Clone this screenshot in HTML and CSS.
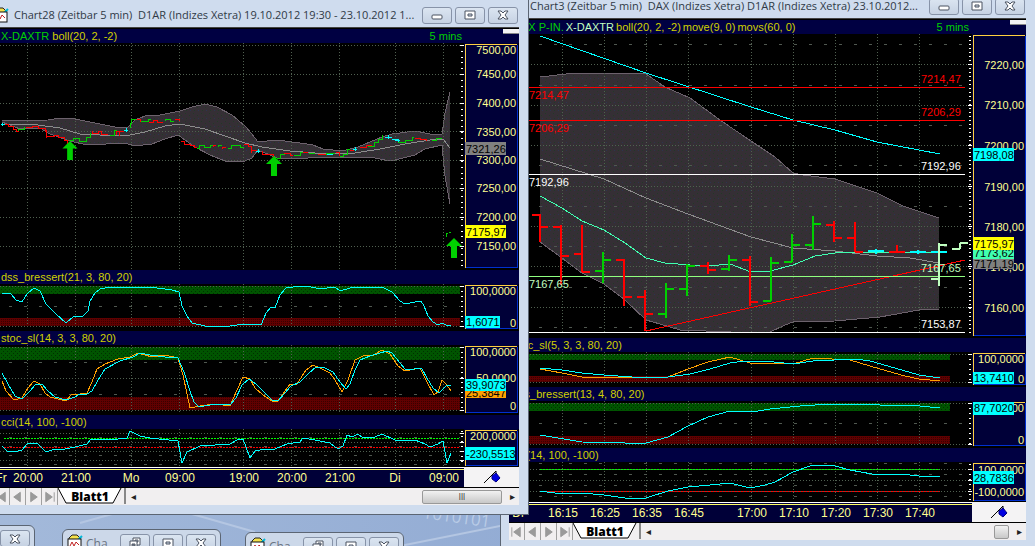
FILE: index.html
```html
<!DOCTYPE html>
<html lang="de">
<head>
  <meta charset="UTF-8">
  <meta name="viewport" content="width=device-width, initial-scale=1.0">
  <title>Chart28 (Zeitbar 5 min)</title>
  <link rel="stylesheet" href="styles.css">
</head>
<body>

  <!-- Shared symbols and fill patterns -->
  <svg class="defs" aria-hidden="true">
    <defs>
      <pattern id="bandFill" width="8" height="8" patternUnits="userSpaceOnUse">
        <rect width="8" height="8" fill="#352f35"/>
        <path d="M1 1h1v1h-1zM5 3h1v1h-1zM2 6h1v1h-1z" fill="#223a26"/>
        <path d="M6 6h1v1h-1z" fill="#2c3450"/>
      </pattern>
      <pattern id="greenFill" width="4" height="4" patternUnits="userSpaceOnUse">
        <rect width="4" height="4" fill="#005400"/>
        <path d="M1 1h1v1h-1zM3 3h1v1h-1z" fill="#003000"/>
      </pattern>
      <pattern id="redFill" width="4" height="4" patternUnits="userSpaceOnUse">
        <rect width="4" height="4" fill="#600000"/>
        <path d="M1 1h1v1h-1zM3 1h1v1h-1zM1 3h1v1h-1zM3 3h1v1h-1z" fill="#380000"/>
      </pattern>
      <symbol id="arrow" viewBox="0 0 16 20"><path d="M8 0L16 8H11V20H5V8H0Z" fill="#00d000"/></symbol>
      <symbol id="min" viewBox="0 0 12 12"><rect x="1" y="6" width="10" height="4" rx="1" fill="#fff" stroke="#4b5361"/></symbol>
      <symbol id="max" viewBox="0 0 12 12"><path d="M1 2H11V10H1Z M4 5V7H8V5Z" fill="#fff" fill-rule="evenodd" stroke="#4b5361"/></symbol>
      <symbol id="restore" viewBox="0 0 12 12"><path d="M4 1H11V8H4Z M6 3V5H9V3Z" fill="#fff" fill-rule="evenodd" stroke="#4b5361"/><path d="M1 4H8V11H1Z M3 7V9H6V7Z" fill="#fff" fill-rule="evenodd" stroke="#4b5361"/></symbol>
      <symbol id="close" viewBox="0 0 12 12"><path d="M1 2H4L6 4L8 2H11L8 6L11 10H8L6 8L4 10H1L4 6Z" fill="#fff" stroke="#4b5361"/></symbol>
      <symbol id="doc" viewBox="0 0 16 16">
        <path d="M2 4L5 1H10L13 4V7H2Z" fill="#f4e04a" stroke="#222"/>
        <path d="M15 2L11 6" stroke="#00b8d8" stroke-width="2"/>
        <rect x="1" y="5" width="13" height="10" fill="#fff" stroke="#111"/>
        <path d="M3 12L5 8L7 12L9 8L12 11" fill="none" stroke="#c02020"/>
      </symbol>
      <symbol id="pin" viewBox="0 0 18 14">
        <path d="M1 13L13 1V12" fill="none" stroke="#000"/>
        <path d="M9 6L13 3L17 8L13 12L9 9Z" fill="#0000e0" stroke="#000080"/>
      </symbol>
    </defs>
  </svg>

  <main class="desktop">
    <svg class="wallpaper" viewBox="0 0 520 40" aria-hidden="true">
      <path d="M80 17L130 3M178 4L255 26M400 40L510 18" class="streak"/>
      <text x="422" y="12" transform="rotate(8 422 12)">1010101</text>
    </svg>

    <!-- Minimised windows -->
    <section class="mini mini-a">
      <button type="button" class="wbtn" aria-label="Schließen"><svg><use href="#close"/></svg></button>
    </section>
    <section class="mini mini-b">
      <svg class="doc"><use href="#doc"/></svg>
      <span class="mini-title">Cha</span>
      <button type="button" class="wbtn" aria-label="Wiederherstellen"><svg><use href="#restore"/></svg></button>
      <button type="button" class="wbtn" aria-label="Maximieren"><svg><use href="#max"/></svg></button>
      <button type="button" class="wbtn" aria-label="Schließen"><svg><use href="#close"/></svg></button>
    </section>
    <section class="mini mini-c">
      <svg class="doc"><use href="#doc"/></svg>
      <span class="mini-title">Cha</span>
      <button type="button" class="wbtn" aria-label="Wiederherstellen"><svg><use href="#restore"/></svg></button>
      <button type="button" class="wbtn" aria-label="Maximieren"><svg><use href="#max"/></svg></button>
      <button type="button" class="wbtn" aria-label="Schließen"><svg><use href="#close"/></svg></button>
    </section>

    <!-- Chart3 -->
    <section class="window chart3">
      <header class="titlebar">
        <svg class="doc"><use href="#doc"/></svg>
        <h2>Chart3 (Zeitbar 5 min)&nbsp; DAX (Indizes Xetra) D1AR (Indizes Xetra) 23.10.2012...</h2>
        <button type="button" class="wbtn" aria-label="Minimieren"><svg><use href="#min"/></svg></button>
        <button type="button" class="wbtn" aria-label="Maximieren"><svg><use href="#max"/></svg></button>
        <button type="button" class="wbtn" aria-label="Schließen"><svg><use href="#close"/></svg></button>
      </header>
      <div class="content">
        <div class="study">
          <span class="green">DAX P-IN.</span><span class="pale">X-DAXTR</span><span>boll(20, 2, -2)</span><span>move(9, 0)</span><span>movs(60, 0)</span>
          <span class="interval">5 mins</span><i class="grip"></i>
        </div>
        <svg class="plot" viewBox="509 34 517 303">
          <path class="band" d="M540 77L575 73H640L646 74L665 87L690 98L720 120L751 141L775 157L793 173L803 175L835 179L877 193L903 206L939 218V309L919 310L880 317L835 321L793 322L785 325L770 332L757 333L680 330L660 324L646 320L625 300L604 284L582 273L562 258L540 242Z"/>
          <path class="edge" d="M540 77L575 73H640L646 74L665 87L690 98L720 120L751 141L775 157L793 173L803 175L835 179L877 193L903 206L939 218M939 309L919 310L880 317L835 321L793 322L785 325L770 332L757 333L680 330L660 324L646 320L625 300L604 284L582 273L562 258L540 242"/>
          <path class="grid" d="M562 34V333M604 34V333M646 34V333M688 34V333M751 34V333M793 34V333M835 34V333M877 34V333M919 34V333M528 64H968M528 105H968M528 145H968M528 186H968M528 226H968M528 266H968M528 307H968"/>
          <path class="dashes" d="M539 44H968M539 85H968M539 125H968M539 165H968M539 206H968M539 246H968M539 287H968M539 327H968"/>
          <path class="avg" d="M540 159L604 179L646 198L688 214L751 237L793 248L835 251L877 256L910 258L939 263"/>
          <path class="cyan" d="M540 36L646 73L751 107L793 120L835 130L877 142L919 150L940 154"/>
          <path class="aqua" d="M540 196L562 208L582 221L604 230L625 243L646 258L665 263L690 265L708 266L730 264L751 272L770 271L793 265L815 256L835 253L939 252"/>
          <path class="red" d="M509 87H965M509 120H965M646 331L965 260"/>
          <path class="white" d="M509 174H965M509 332H965"/>
          <path class="lime" d="M509 276H965"/>
          <!-- price bars -->
          <path class="bar down" d="M532 215H540M540 214V242M540 227H548M553 227H561M561 225V285M561 256H569M574 254H582M582 225V272M582 272H590M616 260H624M624 259V306M624 297H632M637 297H645M645 290V331M645 314H653M700 266H708M708 262V274M708 270H716M742 260H750M750 256V306M750 302H758M826 225H834M834 221V242M834 238H842M847 238H855M855 222V252M855 252H863M889 252H905M897 245V252"/>
          <path class="bar up" d="M595 271H603M603 252V283M603 260H611M658 314H666M666 283V318M666 289H674M679 289H687M687 264V296M687 266H695M721 269H729M729 255V271M729 260H737M763 301H771M771 257V301M771 263H779M784 262H792M792 234V262M792 245H800M805 245H813M813 216V250M813 224H821"/>
          <path class="bar flat" d="M868 251H884M876 249V254M910 252H926M918 250V254M931 252H947"/>
          <path class="bar last" d="M931 279H939M939 243V286M939 245H947M952 249H960M960 243V249M960 243H968"/>
          <g class="lbl">
            <g class="f-red"><text x="529" y="99">7214,47</text><text x="529" y="132">7206,29</text><text x="921" y="83">7214,47</text><text x="921" y="116">7206,29</text></g>
            <g class="f-white"><text x="529" y="186">7192,96</text><text x="921" y="170">7192,96</text><text x="921" y="328">7153,87</text></g>
            <g class="f-pale"><text x="529" y="288">7167,65</text><text x="921" y="272">7167,65</text></g>
          </g>
          <path class="ticks t4" d="M970 36V334"/>
          <path class="majors" d="M968 64H972M968 105H972M968 145H972M968 186H972M968 226H972M968 266H972M968 307H972"/>
          <rect class="scale" x="972" y="34" width="54" height="302"/>
          <path class="scale-hi" d="M973 336V35H1025"/><path class="scale-lo" d="M974 335H1025V36"/>
          <g class="lbl axis">
            <text x="1024" y="69">7220,00</text><text x="1024" y="109">7210,00</text><text x="1024" y="150">7200,00</text><text x="1024" y="191">7190,00</text><text x="1024" y="231">7180,00</text><text x="1024" y="271">7170,00</text><text x="1024" y="312">7160,00</text>
          </g>
          <g class="lbl tag">
            <rect class="tag-cyan" x="973" y="148" width="41" height="13"/><text x="974" y="159">7198,08</text>
            <rect class="tag-grey" x="973" y="257" width="41" height="12"/><text x="974" y="268">7171,19</text>
            <rect class="tag-aqua" x="973" y="247" width="41" height="12"/><text x="974" y="257">7173,62</text>
            <rect class="tag-yellow" x="973" y="237" width="41" height="13"/><text x="974" y="248">7175,97</text>
          </g>
        </svg>

        <div class="study"><span>stoc_sl(5, 3, 3, 80, 20)</span></div>
        <svg class="plot" viewBox="509 352 517 34">
          <rect class="over" x="509" y="354" width="441" height="6"/><rect class="under" x="509" y="376" width="441" height="6"/>
          <path class="grid" d="M562 352V385M604 352V385M646 352V385M688 352V385M751 352V385M793 352V385M835 352V385M877 352V385M919 352V385M509 354H968M509 382H968"/>
          <path class="orange" d="M540 369L562 373L582 377H668L688 369L708 362L730 357L750 363H765L793 364L813 358L850 360L880 369L905 376L919 379L940 381"/>
          <path class="cyan" d="M540 368L562 370L582 373L604 375L646 378L668 377L690 374L710 369L730 363L745 361H765L793 364L813 361L855 359L870 361L895 368L919 375L940 378"/>
          <path class="ticks t5" d="M970 354V384"/><path class="majors" d="M968 354H972M968 382H972"/>
          <rect class="scale" x="972" y="352" width="54" height="33"/>
          <path class="scale-hi" d="M973 385V353H1025"/><path class="scale-lo" d="M974 384H1025V354"/>
          <g class="lbl axis"><text x="1024" y="363">100,0000</text><text x="1024" y="383">0</text></g>
          <g class="lbl tag"><rect class="tag-cyan" x="973" y="372" width="41" height="12"/><text x="974" y="382">13,7410</text></g>
        </svg>

        <div class="study"><span>dss_bressert(13, 4, 80, 20)</span></div>
        <svg class="plot" viewBox="509 401 517 46">
          <rect class="over" x="509" y="403" width="441" height="8"/><rect class="under" x="509" y="436" width="441" height="8"/>
          <path class="grid" d="M562 401V446M604 401V446M646 401V446M688 401V446M751 401V446M793 401V446M835 401V446M877 401V446M919 401V446M509 403H968M509 444H968"/>
          <path class="dashes" d="M539 423H968"/>
          <path class="cyan" d="M540 435L582 442L625 443H646L668 437L688 426L708 417L730 411L752 412L770 409L800 406L830 404H855L880 405H910L940 408"/>
          <path class="ticks t5" d="M970 403V446"/><path class="majors" d="M968 403H972M968 444H972"/>
          <rect class="scale" x="972" y="401" width="54" height="45"/>
          <path class="scale-hi" d="M973 446V402H1025"/><path class="scale-lo" d="M974 445H1025V403"/>
          <g class="lbl axis"><text x="1024" y="412">100,0000</text><text x="1024" y="444">0</text></g>
          <g class="lbl tag"><rect class="tag-cyan" x="973" y="402" width="41" height="13"/><text x="974" y="412">87,7020</text></g>
        </svg>

        <div class="study"><span>cci(14, 100, -100)</span></div>
        <svg class="plot" viewBox="509 462 517 40">
          <path class="grid" d="M562 462V501M604 462V501M646 462V501M688 462V501M751 462V501M793 462V501M835 462V501M877 462V501M919 462V501M509 469H968M509 480H968M509 491H968"/>
          <path class="dashes" d="M539 463H968M539 474H968M539 485H968M539 496H968"/>
          <path class="dot-green" d="M540 469H940"/><path class="dot-red" d="M540 491H940"/>
          <path class="cyan" d="M540 491L562 494L582 493L604 495L625 498H646L668 491L688 487L710 485L730 483L750 488L765 485L775 482L793 472L813 465L835 466L850 470L872 474H900L919 476L940 477"/>
          <path class="ticks t5" d="M970 464V500"/><path class="majors" d="M968 469H972M968 480H972M968 491H972"/>
          <rect class="scale" x="972" y="462" width="54" height="39"/>
          <path class="scale-hi" d="M973 501V463H1025"/><path class="scale-lo" d="M974 500H1025V464"/>
          <g class="lbl axis"><text x="1024" y="474">100,0000</text><text x="1024" y="496">-100,0000</text></g>
          <g class="lbl tag"><rect class="tag-cyan" x="973" y="471" width="41" height="13"/><text x="974" y="482">28,7836</text></g>
        </svg>

        <div class="timeline">
          <svg class="times" viewBox="509 502 463 20">
            <rect class="navy" x="509" y="502" width="463" height="20"/>
            <rect x="509" y="502" width="463" height="1" fill="#fff"/><rect x="509" y="504" width="463" height="1" fill="#ffff60"/>
            <g class="clock"><text x="518" y="517">Di</text><text x="563" y="517">16:15</text><text x="605" y="517">16:25</text><text x="647" y="517">16:35</text><text x="689" y="517">16:45</text><text x="752" y="517">17:00</text><text x="794" y="517">17:10</text><text x="836" y="517">17:20</text><text x="878" y="517">17:30</text><text x="920" y="517">17:40</text></g>
          </svg>
          <div class="corner"><svg class="pin"><use href="#pin"/></svg></div>
        </div>
        <nav class="sheets">
          <button type="button" class="nav" aria-label="Erstes Blatt"><svg viewBox="0 0 16 16"><path d="M3 3V13M12 3V13L5 8Z"/></svg></button>
          <button type="button" class="nav" aria-label="Vorheriges Blatt"><svg viewBox="0 0 16 16"><path d="M11 3V13L4 8Z"/></svg></button>
          <button type="button" class="nav" aria-label="Nächstes Blatt"><svg viewBox="0 0 16 16"><path d="M5 3V13L12 8Z"/></svg></button>
          <button type="button" class="nav" aria-label="Letztes Blatt"><svg viewBox="0 0 16 16"><path d="M13 3V13M4 3V13L11 8Z"/></svg></button>
          <button type="button" class="tab"><svg viewBox="0 0 64 16"><path d="M0 0L8 15H55L63 0" fill="#fff" stroke="#000"/></svg><b>Blatt1</b></button>
          <i class="splitter"></i>
          <div class="scrollbar"><span>◂</span><i class="thumb small"></i><span>▸</span></div>
        </nav>
      </div>
    </section>

    <!-- Chart28 -->
    <section class="window chart28">
      <header class="titlebar">
        <svg class="doc"><use href="#doc"/></svg>
        <h2>Chart28 (Zeitbar 5 min)&nbsp; D1AR (Indizes Xetra) 19.10.2012 19:30 - 23.10.2012 1...</h2>
        <button type="button" class="wbtn" aria-label="Minimieren"><svg><use href="#min"/></svg></button>
        <button type="button" class="wbtn" aria-label="Maximieren"><svg><use href="#max"/></svg></button>
        <button type="button" class="wbtn" aria-label="Schließen"><svg><use href="#close"/></svg></button>
      </header>
      <div class="content">
        <div class="study">
          <span class="green">X-DAXTR</span><span>boll(20, 2, -2)</span>
          <span class="interval">5 mins</span><i class="grip"></i>
        </div>
        <svg class="plot" viewBox="0 43 519 226">
          <path class="band" d="M2 121L48 120L60 118L75 119L95 123L115 127L127 128L135 120L145 116L160 115L180 111L192 107L205 104L217 107L232 115L245 126L252 134L258 142L277 140L300 143L313 145L323 149L342 151L358 147L370 142L382 137L392 134L415 131L430 134H442L445 113L450 92V204L445 176L442 145L425 149L415 155L395 160H385L370 157L345 158L317 157L300 159L277 158L265 153L258 150L252 158L245 161H225L210 155L195 147L178 135L165 139L152 144L135 146L125 143L87 145L70 141L50 134L40 128L20 129L2 122Z"/>
          <path class="edge" d="M2 121L48 120L60 118L75 119L95 123L115 127L127 128L135 120L145 116L160 115L180 111L192 107L205 104L217 107L232 115L245 126L252 134L258 142L277 140L300 143L313 145L323 149L342 151L358 147L370 142L382 137L392 134L415 131L430 134H442L445 113L450 92M450 204L445 176L442 145L425 149L415 155L395 160H385L370 157L345 158L317 157L300 159L277 158L265 153L258 150L252 158L245 161H225L210 155L195 147L178 135L165 139L152 144L135 146L125 143L87 145L70 141L50 134L40 128L20 129L2 122"/>
          <path class="grid" d="M27 43V269M75 43V269M131 43V269M179 43V269M243 43V269M291 43V269M339 43V269M395 43V269M443 43V269M0 45H460M0 74H460M0 103H460M0 131H460M0 160H460M0 188H460M0 217H460M0 246H460"/>
          <path class="avg" d="M2 124H30L45 126L60 128L80 134L100 135H130L145 132L165 126L180 124L205 129L225 136L245 143L262 147L290 151L315 153L340 154L355 153L380 149L405 144L430 140L443 139L450 148"/>
          <path class="step down" d="M4 124H8V126H13V129H16V131H19M26 127H32V126H38V128H45V132M46 130V138M47 136H54V135H58V137H64V140H67V145M92 131V133H98V131H101V134H108M116 135V131H119V136M120 131H124M137 119H140V122M149 122H153V120H157V122H163M175 119H179V121M181 141H184V144H190V145H194V147H197M213 147V145H216M222 149V147H226M244 144H248V146H251V153M252 150H257M262 151V154H268V154H273V158M284 153H290V155H293M303 152H308M318 154H326M336 152H339V156M350 150H354M360 147H366V145H372M415 138H420V139H426V141"/>
          <path class="step up" d="M18 131V129H24V127M70 140H73V138H79V141H86V137H90V133M110 135H114V130H117M130 128V123H131V119H136M141 122V121H148V119H151M165 121V119H170V121H174M197 148H199V145H204V147H210V145H213M218 147V145H222M228 148H231V145H240V147H244M277 158H280V154H285M294 155H300V152H303M309 153H315M326 155V153H335M340 156H343V154H347V149H350M368 146H374V142H378V139H382V135M398 142H405V140H412V137H414M432 140H436V138H442M446 237V233H448M449 232H451"/>
          <path class="step flat" d="M2 123V126M1 124H5M126 128V132M124 130H128M258 149V153M256 151H260M327 154H333M355 147V151M353 149H357M385 137H392M388 135V139M392 139H398V142M395 140H400"/>
          <use href="#arrow" x="62" y="141" width="16" height="19"/><use href="#arrow" x="266" y="156" width="16" height="20"/><use href="#arrow" x="446" y="238" width="16" height="20"/>
          <path class="ticks t6" d="M462 45V268"/>
          <path class="majors" d="M460 45H464M460 74H464M460 103H464M460 131H464M460 160H464M460 188H464M460 217H464M460 246H464"/>
          <rect class="scale" x="464" y="43" width="54" height="225"/>
          <path class="scale-hi" d="M465 268V44H517"/><path class="scale-lo" d="M466 267H517V45"/>
          <g class="lbl axis"><text x="516" y="54">7500,00</text><text x="516" y="78">7450,00</text><text x="516" y="107">7400,00</text><text x="516" y="136">7350,00</text><text x="516" y="164">7300,00</text><text x="516" y="192">7250,00</text><text x="516" y="221">7200,00</text><text x="516" y="250">7150,00</text></g>
          <g class="lbl tag">
            <rect class="tag-grey" x="465" y="142" width="41" height="13"/><text x="466" y="153">7321,26</text>
            <rect class="tag-yellow" x="465" y="225" width="41" height="13"/><text x="466" y="236">7175,97</text>
          </g>
        </svg>

        <div class="study"><span>dss_bressert(21, 3, 80, 20)</span></div>
        <svg class="plot" viewBox="0 284 519 46">
          <rect class="over" x="0" y="286" width="460" height="8"/><rect class="under" x="0" y="318" width="460" height="8"/>
          <path class="grid" d="M27 284V329M75 284V329M131 284V329M179 284V329M243 284V329M291 284V329M339 284V329M395 284V329M443 284V329M0 286H460M0 326H460"/>
          <path class="dashes" d="M9 306H460"/>
          <path class="cyan" d="M2 293L11 294L16 300L22 302L27 294L34 288L40 291L46 304L56 314L66 323L73 317L83 316L88 311L90 301L95 293L100 289L110 287L150 287L172 290L179 292L182 306L187 316L192 323L205 326L230 326L245 324L261 325L264 318L266 313L271 307L275 308L280 295L286 288L293 287L307 286L320 289L335 287L340 291L350 288L365 287L382 287L392 292L400 301L405 304L415 302L421 301L424 306L428 316L433 322L438 325L442 323L446 325L451 325"/>
          <path class="ticks t5" d="M462 286V328"/><path class="majors" d="M460 286H464M460 326H464"/>
          <rect class="scale" x="464" y="284" width="54" height="45"/>
          <path class="scale-hi" d="M465 329V285H517"/><path class="scale-lo" d="M466 328H517V286"/>
          <g class="lbl axis"><text x="516" y="295">100,0000</text><text x="516" y="327">0</text></g>
          <g class="lbl tag"><rect class="tag-cyan" x="465" y="316" width="35" height="12"/><text x="466" y="326">1,6071</text></g>
        </svg>

        <div class="study"><span>stoc_sl(14, 3, 3, 80, 20)</span></div>
        <svg class="plot" viewBox="0 345 519 69">
          <rect class="over" x="0" y="347" width="460" height="13"/><rect class="under" x="0" y="397" width="460" height="13"/>
          <path class="grid" d="M27 345V413M75 345V413M131 345V413M179 345V413M243 345V413M291 345V413M339 345V413M395 345V413M443 345V413M0 347H460M0 378H460M0 410H460"/>
          <path class="dashes" d="M9 362H460M9 394H460"/>
          <path class="orange" d="M2 381L6 391L14 400L22 398L28 388L34 381L40 384L45 393L50 397L66 401L72 394L80 394L87 393L92 382L97 369L105 364L118 359L130 357L138 353L152 357L165 355L178 358L183 375L190 408L200 406L215 404L230 406L237 390L243 377L250 379L255 388L263 395L272 401L278 401L290 384L297 384L306 370L313 365L322 369L330 373L335 380L342 392L348 380L355 360L365 355L372 356L382 350L390 354L398 366L405 371L420 368L426 380L434 395L438 392L442 380L446 384L451 391"/>
          <path class="cyan" d="M2 373L8 384L15 396L22 399L30 391L36 384L42 384L48 391L55 397L66 400L75 397L80 394L87 394L92 391L98 380L105 369L120 361L133 357L140 353L150 355L165 357L178 358L184 372L190 391L194 402L199 407L215 404L230 405L236 398L242 385L249 379L256 384L265 393L272 400L278 401L285 393L291 386L300 382L308 374L316 367L323 367L333 372L340 382L346 389L350 384L355 370L360 360L370 356L380 353L387 351L392 353L400 363L405 369L410 370L418 368L422 369L427 378L433 388L439 393L446 386L451 385"/>
          <path class="ticks t5" d="M462 347V412"/><path class="majors" d="M460 347H464M460 378H464M460 410H464"/>
          <rect class="scale" x="464" y="345" width="54" height="68"/>
          <path class="scale-hi" d="M465 413V346H517"/><path class="scale-lo" d="M466 412H517V347"/>
          <g class="lbl axis"><text x="516" y="356">100,0000</text><text x="516" y="382">50,0000</text><text x="516" y="410">0</text></g>
          <g class="lbl tag">
            <rect class="tag-orange" x="465" y="386" width="41" height="12"/><text x="466" y="397">25,3847</text>
            <rect class="tag-cyan" x="465" y="379" width="41" height="12"/><text x="466" y="389">39,9073</text>
          </g>
        </svg>

        <div class="study"><span>cci(14, 100, -100)</span></div>
        <svg class="plot" viewBox="0 429 519 38">
          <path class="grid" d="M27 429V466M75 429V466M131 429V466M179 429V466M243 429V466M291 429V466M339 429V466M395 429V466M443 429V466M0 433H460M0 442H460M0 451H460M0 460H460"/>
          <path class="dashes" d="M9 437H460M9 446H460M9 455H460M9 464H460"/>
          <path class="dot-green" d="M4 438H460"/><path class="dot-red" d="M4 447H460"/>
          <path class="cyan" d="M2 446L7 451L14 452L22 450L28 443L38 444L46 452L55 449L65 449L75 447L87 444L91 439L110 440L127 438L130 431L140 436L150 438L178 441L182 463L187 452L200 446L215 445L230 444L237 440L243 439L246 447L250 458L255 451L265 449L275 449L287 444L300 442L303 438L315 440L330 443L338 449L343 446L347 435L352 437L358 434L362 437L375 437L382 434L395 440L415 440L425 444L430 447L438 444L443 441L447 463L451 453"/>
          <path class="ticks t5" d="M462 431V466"/><path class="majors" d="M460 433H464M460 442H464M460 451H464M460 460H464"/>
          <rect class="scale" x="464" y="429" width="54" height="37"/>
          <path class="scale-hi" d="M465 466V430H517"/><path class="scale-lo" d="M466 465H517V431"/>
          <g class="lbl axis"><text x="516" y="440">200,0000</text></g>
          <g class="lbl tag"><rect class="tag-cyan" x="465" y="447" width="50" height="13"/><text x="466" y="458">-230,5513</text></g>
        </svg>

        <div class="timeline">
          <svg class="times" viewBox="0 467 464 20">
            <rect class="navy" x="0" y="467" width="464" height="20"/>
            <rect x="0" y="467" width="464" height="1" fill="#fff"/><rect x="0" y="469" width="464" height="1" fill="#ffff60"/>
            <g class="clock"><text x="1" y="482">Fr</text><text x="28" y="482">20:00</text><text x="76" y="482">21:00</text><text x="131" y="482">Mo</text><text x="180" y="482">09:00</text><text x="244" y="482">19:00</text><text x="292" y="482">20:00</text><text x="340" y="482">21:00</text><text x="395" y="482">Di</text><text x="444" y="482">09:00</text></g>
          </svg>
          <div class="corner"><svg class="pin"><use href="#pin"/></svg></div>
        </div>
        <nav class="sheets">
          <button type="button" class="nav" aria-label="Erstes Blatt"><svg viewBox="0 0 16 16"><path d="M3 3V13M12 3V13L5 8Z"/></svg></button>
          <button type="button" class="nav" aria-label="Vorheriges Blatt"><svg viewBox="0 0 16 16"><path d="M11 3V13L4 8Z"/></svg></button>
          <button type="button" class="nav" aria-label="Nächstes Blatt"><svg viewBox="0 0 16 16"><path d="M5 3V13L12 8Z"/></svg></button>
          <button type="button" class="nav" aria-label="Letztes Blatt"><svg viewBox="0 0 16 16"><path d="M13 3V13M4 3V13L11 8Z"/></svg></button>
          <button type="button" class="tab"><svg viewBox="0 0 64 16"><path d="M0 0L8 15H55L63 0" fill="#fff" stroke="#000"/></svg><b>Blatt1</b></button>
          <i class="splitter"></i>
          <div class="scrollbar"><span>◂</span><i class="thumb">|||</i><span>▸</span></div>
        </nav>
      </div>
    </section>
  </main>

</body>
</html>
```
FILE: styles.css
```css
* {
  box-sizing: border-box;
}

body {
  margin: 0;
  font-family: "Open Sans", "Noto Sans", sans-serif;
  font-size: 12px;
}

.defs {
  position: absolute;
  width: 0;
  height: 0;
}

.desktop {
  position: relative;
  height: 100vh;
  overflow: hidden;
  background: linear-gradient(90deg, #a3b9da, #93acd4 50%, #8ca6cf);
}

.wallpaper {
  position: absolute;
  left: 0;
  bottom: 0;
  width: 520px;
  height: 40px;
  font-size: 17px;
  fill: #b9cbe6;
}

.wallpaper .streak {
  stroke: #b4c6e2;
  stroke-width: 2;
}

/* windows */
.window {
  position: absolute;
  padding: 0 9px 9px 8px;
  background: #cfdcee;
  border: 1px solid #5b6573;
  border-top: 0;
}

.chart28 {
  left: -9px;
  top: 0;
  width: 538px;
}

.chart3 {
  left: 500px;
  top: -9px;
  width: 536px;
}

.titlebar {
  display: flex;
  align-items: center;
  gap: 3px;
  height: 27px;
  padding: 3px 1px 0 0;
}

.titlebar h2 {
  flex: 1;
  min-width: 0;
  margin: 0 0 0 2px;
  font-size: 11px;
  line-height: 16px;
  font-weight: 400;
  color: #303a46;
  white-space: nowrap;
}

.doc {
  width: 16px;
  height: 16px;
  flex: none;
}

.chart28 .doc {
  margin-left: -7px;
}

.wbtn {
  display: flex;
  align-items: center;
  justify-content: center;
  flex: none;
  width: 30px;
  height: 17px;
  padding: 0;
  background: linear-gradient(#dbe5f1, #c6d2e3);
  border: 1px solid #8793a8;
  border-radius: 3px;
}

.wbtn svg {
  width: 12px;
  height: 12px;
}

.content {
  background: #000;
  border-top: 1px solid #444;
  overflow: hidden;
}

/* study header over each panel */
.study {
  position: relative;
  display: flex;
  gap: 3px;
  height: 14px;
  margin-top: 1px;
  padding-left: 1px;
  background: #000042;
  color: #d0d000;
  font-family: "Liberation Sans", Arial, sans-serif;
  font-size: 11px;
  line-height: 14px;
  white-space: nowrap;
}

.chart3 .study {
  gap: 2px;
  padding-left: 4px;
}

.study .green,
.study .interval {
  color: #00d000;
}

.study .pale {
  color: #c0ffc0;
}

.study .interval {
  margin-left: auto;
  margin-right: 57px;
}

.grip {
  position: absolute;
  right: 0;
  top: 0;
  width: 16px;
  height: 5px;
  background: #f4f4f4;
  border-bottom: 1px solid #888;
}

.plot,
.times {
  display: block;
  width: 100%;
}

.plot path,
.plot rect {
  shape-rendering: crispEdges;
  fill: none;
}

.plot .band { fill: url(#bandFill); }
.plot .over { fill: url(#greenFill); }
.plot .under { fill: url(#redFill); }
.plot .scale { fill: #000038; }
.navy { fill: #000038; }
.edge { stroke: #6c626c; }
.grid { stroke: #506050; stroke-dasharray: 1 2; }
.dashes { stroke: #505850; stroke-dasharray: 3 12; }
.avg { stroke: #8c8c8c; }
.cyan { stroke: #00ffff; }
.aqua { stroke: #40ffb0; }
.orange { stroke: #ffa000; }
.red { stroke: #ff0000; }
.white { stroke: #ffffff; }
.lime { stroke: #90ff80; }
.dot-green { stroke: #00ff00; stroke-dasharray: 2 1; }
.dot-red { stroke: #ff0000; stroke-dasharray: 2 1; }
.bar { stroke-width: 2; }
.down { stroke: #ff0000; }
.up { stroke: #00d000; }
.flat { stroke: #00ffff; }
.last { stroke: #c0ffc0; }
.majors { stroke: #ffffff; }
.ticks { stroke: #ffffff; stroke-width: 2; }
.t4 { stroke-dasharray: 1 3; }
.t5 { stroke-dasharray: 1 4; }
.t6 { stroke-dasharray: 1 5 1 5 1 4 1 5 1 5; }
.scale-hi { stroke: #ffd040; }
.scale-lo { stroke: #0030d0; }

.plot .tag-cyan { fill: #00ffff; }
.plot .tag-yellow { fill: #ffff00; }
.plot .tag-grey { fill: #808080; }
.plot .tag-aqua { fill: #40ffb0; }
.plot .tag-orange { fill: #ffa000; }

.lbl {
  font-family: "Liberation Sans", Arial, sans-serif;
  font-size: 11px;
}

.axis {
  fill: #ffff90;
  text-anchor: end;
}

.tag { fill: #000; }
.f-red { fill: #ff0000; }
.f-white { fill: #ffffff; }
.f-pale { fill: #c0ffc0; }

/* time axis */
.timeline {
  display: flex;
  height: 20px;
}

.times {
  flex: 1;
  width: auto;
  min-width: 0;
  height: 20px;
}

.clock {
  font-family: "Liberation Sans", Arial, sans-serif;
  font-size: 12px;
  fill: #ffff90;
  text-anchor: middle;
}

.corner {
  display: flex;
  align-items: center;
  justify-content: center;
  width: 54px;
  background: #f4f3f4;
}

.chart28 .corner {
  width: 55px;
}

.pin {
  width: 18px;
  height: 14px;
}

/* sheet tabs */
.sheets {
  display: flex;
  height: 17px;
  margin-top: 1px;
  background: #f1eff0;
}

.chart28 .sheets {
  margin-left: -6px;
}

.nav {
  width: 16px;
  height: 17px;
  padding: 0;
  background: #f1eff0;
  border: 0;
  border-right: 1px solid #a0a0a0;
}

.nav svg {
  display: block;
  width: 15px;
  height: 16px;
  fill: #9a9a9a;
  stroke: #9a9a9a;
}

.tab {
  position: relative;
  width: 64px;
  height: 17px;
  padding: 0;
  background: none;
  border: 0;
  font: bold 12px/16px "Open Sans", sans-serif;
}

.tab svg {
  position: absolute;
  left: 0;
  top: 0;
  width: 64px;
  height: 16px;
}

.tab b {
  position: relative;
}

.splitter {
  width: 4px;
  margin-bottom: 1px;
  border-right: 2px solid #888;
}

.scrollbar {
  flex: 1;
  display: flex;
  align-items: center;
  padding: 0 4px 0 5px;
  font: 10px/16px "DejaVu Sans", sans-serif;
  color: #222;
}

.thumb {
  width: 80px;
  height: 14px;
  margin: 0 8px 0 auto;
  background: linear-gradient(#f2f2f2, #c8c8c8);
  border: 1px solid #999;
  border-radius: 2px;
  font: 8px/10px "Liberation Sans", sans-serif;
  text-align: center;
}

.thumb.small {
  width: 15px;
}

/* minimised windows */
.mini {
  position: absolute;
  display: flex;
  gap: 3px;
  width: 159px;
  height: 30px;
  padding: 4px 4px 0;
  background: #ccd8e9;
  border: 1px solid #5b6573;
  border-radius: 6px 6px 0 0;
}

.mini-a {
  left: -124px;
  top: 525px;
  justify-content: flex-end;
}

.mini-b {
  left: 62px;
  top: 529px;
}

.mini-c {
  left: 245px;
  top: 532px;
}

.mini-title {
  flex: 1;
  color: #6a7482;
  line-height: 20px;
}
```
